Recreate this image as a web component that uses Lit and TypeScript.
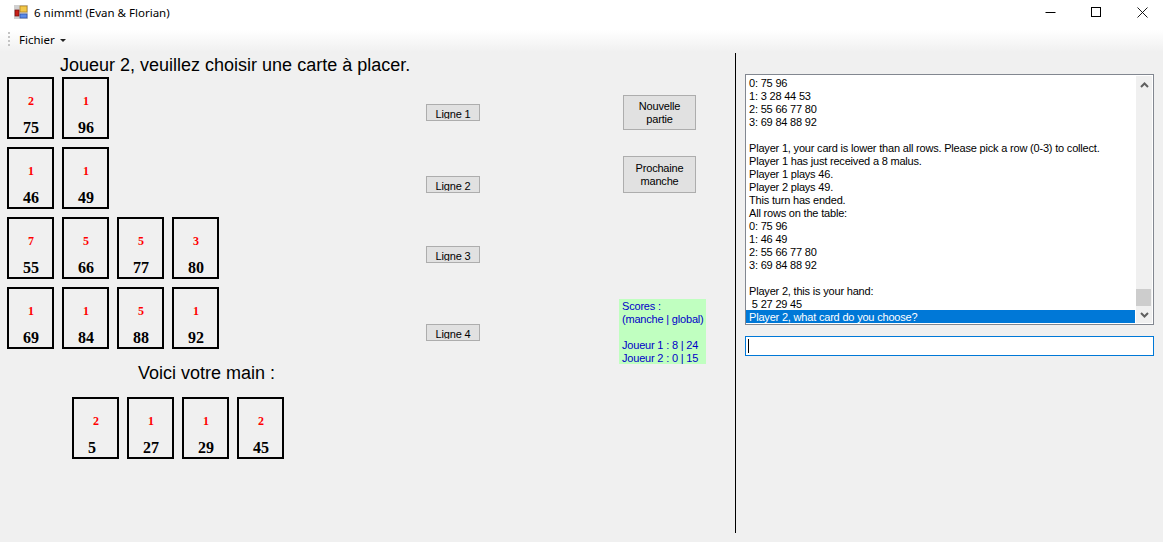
import { LitElement, html, css, svg } from "lit";
import { customElement } from "lit/decorators.js";

type C = [number, number];
const rows: C[][] = [
  [[2, 75], [1, 96]],
  [[1, 46], [1, 49]],
  [[7, 55], [5, 66], [5, 77], [3, 80]],
  [[1, 69], [1, 84], [5, 88], [1, 92]],
];
const hand: C[] = [[2, 5], [1, 27], [1, 29], [2, 45]];
const log = [
  "0: 75 96", "1: 3 28 44 53", "2: 55 66 77 80", "3: 69 84 88 92", "",
  "Player 1, your card is lower than all rows. Please pick a row (0-3) to collect.",
  "Player 1 has just received a 8 malus.", "Player 1 plays 46.", "Player 2 plays 49.",
  "This turn has ended.", "All rows on the table:", "0: 75 96", "1: 46 49",
  "2: 55 66 77 80", "3: 69 84 88 92", "", "Player 2, this is your hand:", " 5 27 29 45",
];

@customElement("app-root")
export class AppRoot extends LitElement {
  static styles = css`
    :host { display: block; width: 1163px; height: 542px; overflow: hidden; background: #f0f0f0; color: #000;
      font-family: "Liberation Sans", Arial, sans-serif; font-size: 11px; letter-spacing: -0.19px; }
    .titlebar { height: 30px; background: #fff; display: flex; align-items: flex-start; }
    .appicon { margin: 5px 0 0 14px; width: 14px; height: 14px; }
    .apptitle { margin: 4px 0 0 6px; font-family: "Noto Sans", sans-serif; font-size: 11.5px; letter-spacing: 0; line-height: 18px; }
    .winbtns { margin-left: auto; display: flex; }
    .winbtn { width: 46px; height: 24px; box-sizing: border-box; padding-left: 4px; display: flex; align-items: center; justify-content: center; }
    .menubar { height: 22px; background: linear-gradient(#fff, #f0f0f0); display: flex; align-items: flex-start; }
    .grip { width: 2px; height: 14px; margin: 2px 0 0 8px; border-left: 2px dotted #c4c4c4; box-sizing: border-box; }
    .menu { margin: 1px 0 0 9px; font-family: "Noto Sans", sans-serif; font-size: 11.5px; letter-spacing: 0; line-height: 18px; }
    .caret { margin: 9px 0 0 5px; width: 0; height: 0; border: 3px solid transparent; border-top: 3px solid #222; border-bottom: 0; }
    .main { display: flex; height: 480px; padding-top: 1px; }
    .board { flex: none; width: 736px; box-sizing: border-box; border-right: 1px solid #000; display: grid;
      grid-template-columns: 426px 197px 1fr; }
    .play { display: flex; flex-direction: column; padding-left: 7px; }
    .heading { font-size: 18px; letter-spacing: 0; line-height: 22px; height: 23px; padding-top: 1px; margin-left: 53px; white-space: nowrap; }
    .row { display: flex; gap: 8px; height: 62px; margin-bottom: 8px; }
    .voici { font-size: 18px; letter-spacing: 0; line-height: 22px; margin: 5px 0 0 131px; height: 35px; }
    .hand { margin-left: 65px; }
    .card { width: 47px; height: 62px; box-sizing: border-box; border: 2px solid #000; display: flex; flex-direction: column;
      align-items: flex-start; font-family: "Liberation Serif", "Times New Roman", serif; font-weight: 700; letter-spacing: 0; }
    .malus { color: #f00; font-size: 12px; line-height: 14px; margin: 15px 0 0 19px; }
    .num { font-size: 16px; line-height: 18px; margin: 11px 0 0 14px; }
    .lines { display: flex; flex-direction: column; align-items: flex-start; padding-top: 51px; }
    .btn { box-sizing: border-box; background: #e1e1e1; border: 1px solid #adadad; text-align: center; color: #000; }
    .ln { width: 54px; height: 17px; }
    .cap { display: block; height: 14px; overflow: hidden; line-height: 18px; }
    .ln2 { margin-top: 55px; } .ln3 { margin-top: 53px; } .ln4 { margin-top: 61px; }
    .side { display: flex; flex-direction: column; align-items: flex-start; padding-top: 42px; }
    .act { width: 73px; line-height: 13px; padding-top: 4px; }
    .a1 { height: 35px; } .a2 { height: 37px; margin-top: 26px; padding-top: 5px; }
    .scores { margin: 106px 0 0 -4px; width: 87px; height: 65px; background: #c0ffc0; color: #0000c8; line-height: 13px;
      padding: 1px 0 0 3px; box-sizing: border-box; white-space: pre; }
    .console { flex: 1; padding: 21px 9px 0 9px; display: flex; flex-direction: column; min-width: 0; }
    .list { height: 251px; box-sizing: border-box; border: 1px solid #828790; background: #fff; display: flex; }
    .lines-box { flex: 1; display: flex; flex-direction: column; justify-content: flex-end; overflow: hidden; padding: 0 1px 1px 0; min-width: 0; }
    .lg { height: 13px; line-height: 14px; padding-left: 3px; white-space: pre; }
    .sel { background: #0078d7; color: #fff; }
    .sb { width: 16px; margin: 1px 1px 1px 0; background: #f0f0f0; display: flex; flex-direction: column; align-items: center; }
    .sb-up, .sb-down { height: 17px; width: 16px; display: flex; align-items: center; justify-content: center; }
    .sb-track { flex: 1; display: flex; flex-direction: column; justify-content: flex-end; width: 100%; }
    .thumb { height: 17px; background: #cdcdcd; margin-right: 1px; }
    .input { margin-top: 11px; height: 20px; box-sizing: border-box; border: 1px solid #0078d7; background: #fff; padding: 2px 0 0 2px; }
    .caretline { width: 1px; height: 14px; background: #000; }
  `;

  card(c: C) {
    return html`<div class="card"><div class="malus">${c[0]}</div><div class="num">${c[1]}</div></div>`;
  }

  render() {
    return html`
      <div class="titlebar">
        <svg class="appicon" viewBox="0 0 14 14">
          <rect x="0" y="0" width="14" height="14" fill="#d0d0d0"/>
          <rect x="6" y="1" width="7" height="6" fill="#f2c848" stroke="#a87818" stroke-width=".7"/>
          <rect x="1" y="5" width="4" height="6" fill="#c82018" stroke="#701010" stroke-width=".7"/>
          <rect x="6" y="9" width="7" height="4" fill="#5a8ae8" stroke="#2a4aa0" stroke-width=".7"/>
        </svg>
        <span class="apptitle">6 nimmt! (Evan &amp; Florian)</span>
        <div class="winbtns">
          <div class="winbtn">${svg`<svg width="11" height="11"><path d="M0.5 5.5H10.5" stroke="#000"/></svg>`}</div>
          <div class="winbtn">${svg`<svg width="11" height="11"><rect x=".5" y=".5" width="9" height="9" fill="none" stroke="#000"/></svg>`}</div>
          <div class="winbtn">${svg`<svg width="11" height="11"><path d="M.5 .5L10.5 10.5M10.5 .5L.5 10.5" stroke="#000" stroke-width=".9"/></svg>`}</div>
        </div>
      </div>
      <div class="menubar"><div class="grip"></div><span class="menu">Fichier</span><div class="caret"></div></div>
      <div class="main">
        <div class="board">
          <div class="play">
            <div class="heading">Joueur 2, veuillez choisir une carte à placer.</div>
            ${rows.map((r) => html`<div class="row">${r.map((c) => this.card(c))}</div>`)}
            <div class="voici">Voici votre main :</div>
            <div class="row hand">${hand.map((c) => this.card(c))}</div>
          </div>
          <div class="lines">
            ${[1, 2, 3, 4].map((n) => html`<div class="btn ln ln${n}"><span class="cap">Ligne ${n}</span></div>`)}
          </div>
          <div class="side">
            <div class="btn act a1">Nouvelle<br />partie</div>
            <div class="btn act a2">Prochaine<br />manche</div>
            <div class="scores">Scores :
(manche | global)

Joueur 1 : 8 | 24
Joueur 2 : 0 | 15</div>
          </div>
        </div>
        <div class="console">
          <div class="list">
            <div class="lines-box">
              ${log.map((l) => html`<div class="lg">${l}</div>`)}
              <div class="lg sel">Player 2, what card do you choose?</div>
            </div>
            <div class="sb">
              <div class="sb-up"><svg width="9" height="6"><path d="M1 5L4.5 1.5L8 5" fill="none" stroke="#606060" stroke-width="2"/></svg></div>
              <div class="sb-track"><div class="thumb"></div></div>
              <div class="sb-down"><svg width="9" height="6"><path d="M1 1L4.5 4.5L8 1" fill="none" stroke="#606060" stroke-width="2"/></svg></div>
            </div>
          </div>
          <div class="input"><div class="caretline"></div></div>
        </div>
      </div>
    `;
  }
}
